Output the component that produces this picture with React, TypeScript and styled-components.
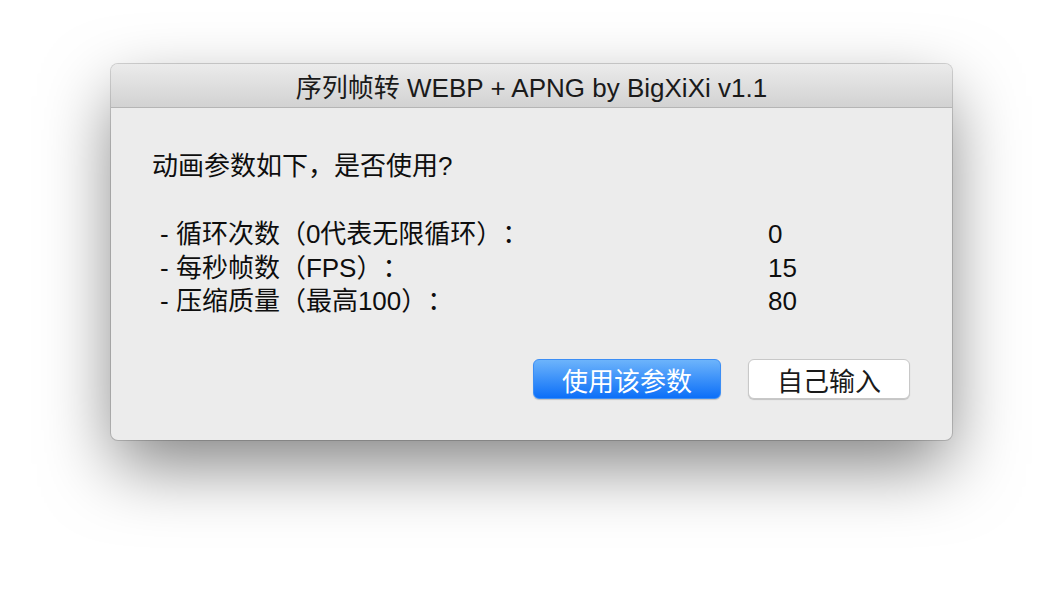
import React from "react";
import styled, { createGlobalStyle } from "styled-components";

const Global = createGlobalStyle`
  html, body { margin: 0; padding: 0; background: #ffffff; }
  body {
    font-family: "Liberation Sans", "Noto Sans CJK SC", sans-serif;
    text-spacing-trim: space-all;
  }
`;

const Page = styled.div`
  width: 1064px;
  height: 600px;
  padding: 64px 0 0 111px;
  box-sizing: border-box;
`;

const Window = styled.div`
  width: 841px;
  height: 376px;
  border-radius: 7px;
  background: #ececec;
  box-shadow: 0 0 0 1px rgba(0, 0, 0, 0.16), 0 28px 70px -4px rgba(0, 0, 0, 0.5);
  overflow: hidden;
  display: flex;
  flex-direction: column;
`;

const TitleBar = styled.div`
  height: 43px;
  flex: none;
  background: linear-gradient(#ebebeb, #d2d2d2);
  border-bottom: 1px solid #b5b5b5;
  display: flex;
  align-items: center;
  justify-content: center;
  font-size: 26px;
  color: #1a1a1a;
`;

const Body = styled.div`
  flex: 1;
  padding: 41px 42px 41px 41px;
  display: flex;
  flex-direction: column;
  font-size: 26px;
  color: #0e0e0e;
`;

const Question = styled.div`
  line-height: 34px;
`;

const List = styled.div`
  margin-top: 35px;
  padding-left: 8px;
  display: grid;
  grid-template-columns: 608px auto;
  line-height: 33.5px;
`;

const Buttons = styled.div`
  margin-top: auto;
  display: flex;
  justify-content: flex-end;
  gap: 27px;
`;

const Button = styled.button<{ $primary?: boolean; $w: number }>`
  width: ${(p) => p.$w}px;
  height: 40px;
  border-radius: 6px;
  font-family: inherit;
  font-size: 26px;
  padding: 0;
  display: flex;
  align-items: center;
  justify-content: center;
  color: ${(p) => (p.$primary ? "#ffffff" : "#1a1a1a")};
  background: ${(p) =>
    p.$primary ? "linear-gradient(#6db4fb, #0c6ff8)" : "#ffffff"};
  border: 1px solid ${(p) => (p.$primary ? "#3c8ef5" : "#c8c8c8")};
  box-shadow: 0 1px 1px rgba(0, 0, 0, 0.18);
`;

const rows: [string, string][] = [
  ["- 循环次数（0代表无限循环）：", "0"],
  ["- 每秒帧数（FPS）：", "15"],
  ["- 压缩质量（最高100）：", "80"],
];

export default function App() {
  return (
    <>
      <Global />
      <Page>
        <Window>
          <TitleBar>序列帧转 WEBP + APNG by BigXiXi v1.1</TitleBar>
          <Body>
            <Question>动画参数如下，是否使用?</Question>
            <List>
              {rows.map(([k, v]) => (
                <React.Fragment key={k}>
                  <span>{k}</span>
                  <span>{v}</span>
                </React.Fragment>
              ))}
            </List>
            <Buttons>
              <Button $primary $w={188}>使用该参数</Button>
              <Button $w={162}>自己输入</Button>
            </Buttons>
          </Body>
        </Window>
      </Page>
    </>
  );
}
